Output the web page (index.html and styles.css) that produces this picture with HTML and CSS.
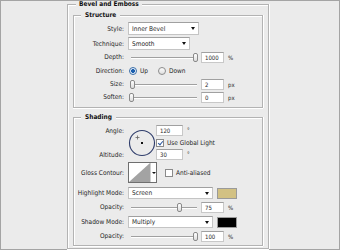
FILE: index.html
```html
<!DOCTYPE html>
<html>
<head>
<meta charset="utf-8">
<link rel="stylesheet" href="styles.css">
</head>
<body>
<div class="frame">
  <div class="group outer">
    <div class="head"><span>Bevel and Emboss</span></div>
    <div class="body outer-body">
      <div class="group inner structure">
        <div class="head"><span>Structure</span></div>
        <div class="body structure-body">
          <div class="row h13">
            <label>Style:</label>
            <div class="ctrl"><div class="select w-style"><span>Inner Bevel</span><i class="arrow"></i></div></div>
          </div>
          <div class="row h13 mt2">
            <label>Technique:</label>
            <div class="ctrl"><div class="select w-tech"><span>Smooth</span><i class="arrow"></i></div></div>
          </div>
          <div class="row h12 mt1">
            <label>Depth:</label>
            <div class="ctrl">
              <div class="slider"><i class="track"></i><i class="thumb" style="left:64px"></i></div>
              <div class="num">1000</div><span class="unit">%</span>
            </div>
          </div>
          <div class="row h13 mt1">
            <label>Direction:</label>
            <div class="ctrl">
              <i class="radio on"></i><span class="rlabel">Up</span>
              <i class="radio down"></i><span class="rlabel">Down</span>
            </div>
          </div>
          <div class="row h12 mt1">
            <label>Size:</label>
            <div class="ctrl">
              <div class="slider"><i class="track"></i><i class="thumb" style="left:1px"></i></div>
              <div class="num">2</div><span class="unit">px</span>
            </div>
          </div>
          <div class="row h12 mt1">
            <label>Soften:</label>
            <div class="ctrl">
              <div class="slider"><i class="track"></i><i class="thumb" style="left:0px"></i></div>
              <div class="num">0</div><span class="unit">px</span>
            </div>
          </div>
        </div>
      </div>
      <div class="group inner shading">
        <div class="head"><span>Shading</span></div>
        <div class="body shading-body">
          <div class="angle-grid">
            <label class="g-label r1">Angle:</label>
            <div class="dial">
              <svg width="28" height="28" viewBox="0 0 28 28">
                <circle cx="14" cy="14" r="12.5" fill="none" stroke="#2f3d6b" stroke-width="1.1"/>
                <rect x="13" y="13" width="2" height="2" fill="#111"/>
                <path d="M9.5 6.5v4M7.5 8.5h4" stroke="#666" stroke-width="0.8"/>
              </svg>
            </div>
            <div class="gctrl r1"><div class="num w27">120</div><span class="deg">°</span></div>
            <div class="gctrl r2"><i class="check on"></i><span class="clabel">Use Global Light</span></div>
            <label class="g-label r3">Altitude:</label>
            <div class="gctrl r3"><div class="num w27">30</div><span class="deg">°</span></div>
          </div>
          <div class="row h21 mt2">
            <label>Gloss Contour:</label>
            <div class="ctrl">
              <div class="contour">
                <svg class="curve" width="21" height="19" viewBox="0 0 21 19">
                  <rect width="21" height="19" fill="#fff"/>
                  <path d="M0 19L21 0V19Z" fill="#a3a3a3"/>
                </svg>
                <div class="cdrop"><i class="arrow"></i></div>
              </div>
              <i class="check aa"></i><span class="clabel">Anti-aliased</span>
            </div>
          </div>
          <div class="row h12 mt4">
            <label>Highlight Mode:</label>
            <div class="ctrl">
              <div class="select w-mode"><span>Screen</span><i class="arrow"></i></div>
              <i class="swatch tan"></i>
            </div>
          </div>
          <div class="row h12 mt2">
            <label>Opacity:</label>
            <div class="ctrl">
              <div class="slider"><i class="track"></i><i class="thumb" style="left:48px"></i></div>
              <div class="num">75</div><span class="unit">%</span>
            </div>
          </div>
          <div class="row h12 mt3">
            <label>Shadow Mode:</label>
            <div class="ctrl">
              <div class="select w-mode"><span>Multiply</span><i class="arrow"></i></div>
              <i class="swatch black"></i>
            </div>
          </div>
          <div class="row h12 mt2">
            <label>Opacity:</label>
            <div class="ctrl">
              <div class="slider"><i class="track"></i><i class="thumb" style="left:64px"></i></div>
              <div class="num">100</div><span class="unit">%</span>
            </div>
          </div>
        </div>
      </div>
    </div>
  </div>
</div>
</body>
</html>
```
FILE: styles.css
```css
* { box-sizing: border-box; }
body {
  margin: 0;
  font-family: "DejaVu Sans Condensed", "DejaVu Sans", sans-serif;
  font-size: 6.5px;
  color: #262626;
}
.frame {
  width: 340px;
  height: 250px;
  border: 1px solid #a4a4a4;
  background: #ebebeb;
  padding-left: 66px;
  display: flex;
  flex-direction: column;
}
.group { display: flex; flex-direction: column; }
.outer { width: 202px; flex: 1; }
.head { display: flex; height: 8px; }
.head::before {
  content: "";
  width: 8px;
  margin-top: 3px;
  border-top: 1px solid #b3b3b3;
  border-left: 1px solid #b3b3b3;
  box-shadow: inset 1px 1px 0 #fff;
}
.head::after {
  content: "";
  flex: 1;
  margin-top: 3px;
  border-top: 1px solid #b3b3b3;
  border-right: 1px solid #b3b3b3;
  box-shadow: inset 0 1px 0 #fff, 1px 0 0 #fff;
}
.head span {
  font-weight: bold;
  line-height: 7px;
  padding: 0 3px;
  color: #111;
}
.inner .head::before { width: 7px; }
.inner .head span { padding: 0 4px; }
.body {
  border: 1px solid #b3b3b3;
  border-top: 0;
  box-shadow: inset 1px 0 0 #fff, 1px 0 0 #fff, 0 1px 0 #fff;
}
.outer-body { flex: 1; padding: 3px 5px 2px; display: flex; flex-direction: column; }
.structure-body { padding: 2px 0 4px; }
.shading { margin-top: 6px; }
.shading-body { padding: 3px 0 3px; }

.row {
  display: grid;
  grid-template-columns: 50px auto;
  column-gap: 4px;
  align-items: center;
}
.row label, .g-label { text-align: right; white-space: nowrap; }
.h12 { height: 12px; }
.h13 { height: 13px; }
.h21 { height: 21px; }
.mt1 { margin-top: 1px; }
.mt2 { margin-top: 2px; }
.mt3 { margin-top: 3px; }
.mt4 { margin-top: 4px; }
.ctrl { display: flex; align-items: center; height: 100%; }

.select {
  display: flex;
  align-items: center;
  height: 12px;
  background: #fff;
  border: 1px solid #c4c4c4;
  border-top-color: #a0a0a0;
  padding-left: 3px;
}
.w-style { width: 71px; height: 13px; }
.w-tech { width: 62px; height: 13px; }
.w-mode { width: 85px; }
.arrow {
  margin-left: auto;
  margin-right: 3px;
  width: 0;
  height: 0;
  border-left: 2.5px solid transparent;
  border-right: 2.5px solid transparent;
  border-top: 3px solid #111;
}

.slider { position: relative; width: 69px; height: 10px; margin-left: 1px; }
.track {
  position: absolute;
  left: 2px; right: 1px; top: 5px;
  height: 1px;
  background: #a0a0a0;
  box-shadow: 0 1px 0 #fff;
}
.thumb {
  position: absolute;
  top: 1px;
  width: 5px;
  height: 9px;
  border: 1px solid #8a8a8a;
  border-radius: 2px;
  background: linear-gradient(#fff, #dcdcdc);
}
.num {
  width: 23px;
  height: 11px;
  margin-left: 3px;
  background: #fff;
  border: 1px solid #c8c8c8;
  border-top-color: #a0a0a0;
  padding-left: 3px;
  line-height: 9px;
  font-size: 6px;
}
.unit { margin-left: 4px; font-size: 6px; }

.radio {
  width: 8px; height: 8px;
  border-radius: 50%;
  border: 1px solid #8c8c8c;
  background: linear-gradient(#fdfdfd, #dedede);
  margin-left: 1px;
}
.radio.on {
  border-color: #3a6ea8;
  background: radial-gradient(circle, #1b5fae 0 1.8px, #e8f0fa 2.2px);
}
.radio.down { margin-left: 10px; }
.rlabel { margin-left: 3px; }

.angle-grid {
  display: grid;
  grid-template-columns: 54px 28px auto;
  grid-template-rows: 11px 13px 11px;
  align-items: center;
}
.g-label { padding-right: 4px; }
.r1 { grid-row: 1; }
.r2 { grid-row: 2; grid-column: 3; }
.r3 { grid-row: 3; }
.g-label.r1, .g-label.r3 { grid-column: 1; }
.gctrl.r1, .gctrl.r3 { grid-column: 3; }
.dial { grid-column: 2; grid-row: 1 / 4; display: flex; }
.gctrl { display: flex; align-items: center; height: 100%; }
.num.w27 { width: 27px; margin-left: 0; }
.deg { margin-left: 4px; margin-top: -3px; font-size: 6px; }

.check {
  width: 8px; height: 8px;
  background: #fff;
  border: 1px solid #8a8a8a;
  position: relative;
}
.check.on::after {
  content: "";
  position: absolute;
  left: 2px; top: 0;
  width: 2px; height: 4px;
  border-right: 1.3px solid #2d58a0;
  border-bottom: 1.3px solid #2d58a0;
  transform: rotate(40deg);
}
.clabel { margin-left: 3px; }
.check.aa { margin-left: 8px; }

.contour {
  display: flex;
  height: 21px;
  border: 1px solid #6f6f6f;
  background: #fff;
}
.curve { display: block; }
.cdrop { width: 6px; display: flex; align-items: center; border-left: 1px solid #cfcfcf; }
.cdrop .arrow { margin: 0 auto; border-left-width: 2px; border-right-width: 2px; border-top-width: 2.5px; }

.swatch { width: 20px; height: 11px; margin-left: 4px; border: 1px solid #9a9a9a; }
.swatch.tan { background: #d2c183; }
.swatch.black { background: #000; }
```
